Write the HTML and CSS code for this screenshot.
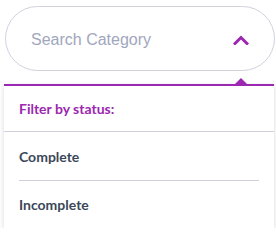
FILE: index.html
```html
<!DOCTYPE html>
<html lang="en">
<head>
    <meta charset="UTF-8">
    <meta name="viewport" content="width=device-width, initial-scale=1.0">
    <title>Search Category</title>
    <link rel="stylesheet" href="styles.css">
</head>
<body>
    <div class="category-filter">
        <div class="search-box">
            <div class="search-placeholder">Search Category</div>
            <svg class="chevron" width="16" height="10" viewBox="0 0 16 10">
                <path d="M2 8.5 L8 2.5 L14 8.5" fill="none" stroke="#9c27b0" stroke-width="3" stroke-linecap="square"/>
            </svg>
        </div>

        <!-- Dropdown -->
        <div class="dropdown">
            <div class="dropdown-title">Filter by status:</div>
            <div class="dropdown-list">
                <div class="dropdown-item">Complete</div>
                <div class="dropdown-item">Incomplete</div>
            </div>
        </div>
    </div>
</body>
</html>
```

FILE: styles.css
```css
body {
    font-family: Lato, 'Open Sans', sans-serif;
    margin: 0;
    padding: 0;
    background-color: #ffffff;
}
.category-filter {
    width: 276px;
    padding-top: 6px;
}
.search-box {
    box-sizing: border-box;
    height: 65px;
    margin: 0 1px 0 5px;
    border: 1px solid #d0d2de;
    border-radius: 33px;
    display: flex;
    align-items: center;
    justify-content: space-between;
    padding: 0 25px 0 25px;
}
.search-placeholder {
    font-family: 'Liberation Sans', Arial, sans-serif;
    font-size: 16px;
    color: #a1a6bd;
    padding-top: 2px;
}
.chevron {
    display: block;
    margin-top: 2px;
}
.dropdown {
    position: relative;
    margin: 13px 2px 0 4px;
    border-top: 2px solid #9c27b0;
    background-color: #ffffff;
    box-shadow: 0 2px 5px rgba(0, 0, 0, 0.16);
}
.dropdown::before {
    content: "";
    position: absolute;
    top: -8px;
    left: 231px;
    border-left: 6px solid transparent;
    border-right: 6px solid transparent;
    border-bottom: 6px solid #9c27b0;
}
.dropdown-title {
    height: 46px;
    box-sizing: border-box;
    padding: 0 15px;
    display: flex;
    align-items: center;
    font-size: 14px;
    font-weight: bold;
    color: #9c27b0;
    border-bottom: 1px solid #cfd1dc;
}
.dropdown-list {
    padding: 0 15px;
}
.dropdown-item {
    height: 48px;
    display: flex;
    align-items: center;
    font-size: 14px;
    font-weight: bold;
    color: #3b4759;
}
.dropdown-item + .dropdown-item {
    border-top: 1px solid #cfd1dc;
    height: 47px;
}
```
